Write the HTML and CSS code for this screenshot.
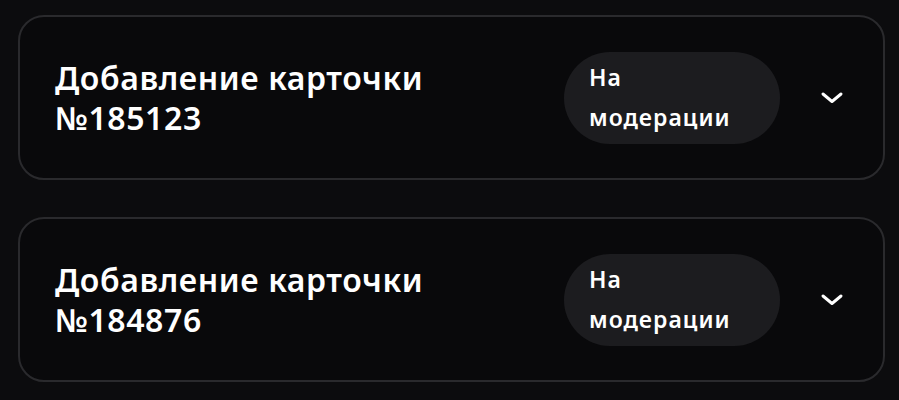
FILE: index.html
```html
<!DOCTYPE html>
<html lang="ru">
<head>
<meta charset="utf-8">
<link rel="stylesheet" href="styles.css">
</head>
<body>
<div class="list">
  <div class="card">
    <div class="title">Добавление карточки<br>№185123</div>
    <div class="status">На модерации</div>
    <button class="toggle" aria-label="Развернуть">
      <svg width="24" height="14" viewBox="0 0 24 14"><path d="M3 3 L12 10.5 L21 3" fill="none" stroke="#fff" stroke-width="3" stroke-linecap="round" stroke-linejoin="round"/></svg>
    </button>
  </div>
  <div class="card">
    <div class="title">Добавление карточки<br>№184876</div>
    <div class="status">На модерации</div>
    <button class="toggle" aria-label="Развернуть">
      <svg width="24" height="14" viewBox="0 0 24 14"><path d="M3 3 L12 10.5 L21 3" fill="none" stroke="#fff" stroke-width="3" stroke-linecap="round" stroke-linejoin="round"/></svg>
    </button>
  </div>
</div>
</body>
</html>
```
FILE: styles.css
```css
html, body {
  margin: 0;
  background: #0c0c0e;
}

body {
  font-family: "Noto Sans", "Open Sans", sans-serif;
  color: #ffffff;
  padding: 15px 14px 0 18px;
}

.list {
  display: flex;
  flex-direction: column;
  gap: 37px;
}

.card {
  box-sizing: border-box;
  height: 165px;
  border: 2px solid #2a2a2d;
  border-radius: 26px;
  background: #09090b;
  display: flex;
  align-items: center;
  padding: 0 27px 0 35px;
}

.title {
  flex: 1;
  font-size: 32px;
  font-weight: 600;
  line-height: 40px;
  letter-spacing: 0.6px;
}

.status {
  box-sizing: border-box;
  width: 216px;
  height: 92px;
  border-radius: 46px;
  background: #1c1c1f;
  padding: 5px 18px 0 25px;
  font-size: 23px;
  font-weight: 600;
  line-height: 40px;
  letter-spacing: 1px;
}

.toggle {
  width: 48px;
  height: 48px;
  margin-left: 28px;
  border: 0;
  padding: 0;
  background: none;
  display: flex;
  align-items: center;
  justify-content: center;
}
```
